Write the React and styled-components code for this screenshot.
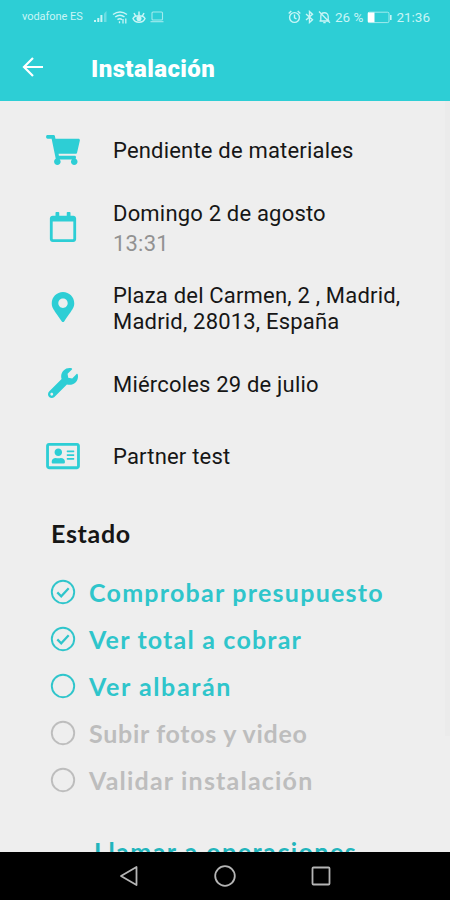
import React from 'react';
import styled, { createGlobalStyle } from 'styled-components';
import { FaShoppingCart, FaRegCalendar, FaMapMarkerAlt, FaWrench, FaRegAddressCard } from 'react-icons/fa';

const GlobalStyle = createGlobalStyle`
  body {
    margin: 0;
    background-color: #eeeeee;
    font-family: Roboto, "Noto Sans", sans-serif;
  }
`

// styled components
const Screen = styled.div`
  display: flex;
  flex-direction: column;
  width: 450px;
  height: 900px;
  overflow: hidden;
  background-color: #eeeeee;
`
const Header = styled.header`
  flex: none;
  height: 101px;
  color: white;
  background-color: #2dced5;
`
const StatusBar = styled.div`
  display: flex;
  justify-content: space-between;
  align-items: center;
  height: 34px;
  padding: 0 20px 0 22px;
  color: #c9f5f6;
`
const StatusGroup = styled.div`
  display: flex;
  align-items: center;
  gap: ${props => props.$gap};
  svg {
    display: block;
    flex: none;
  }
`
const StatusText = styled.span`
  font-size: ${props => props.$size};
  line-height: 16px;
  white-space: nowrap;
`
const Carrier = styled(StatusText)`
  margin-right: 7px;
  letter-spacing: -0.05px;
`
const TitleBar = styled.div`
  display: flex;
  align-items: center;
  height: 66px;
  padding-left: 22px;
  gap: 47px;
`
const BackButton = styled.button`
  display: flex;
  padding: 0;
  border: none;
  background: none;
  color: inherit;
  cursor: pointer;
`
const Title = styled.h1`
  margin: 3px 0 0;
  font-size: 24px;
  font-weight: 900;
  letter-spacing: 0.42px;
  line-height: 30px;
`
const Content = styled.main`
  flex: 1;
  display: flex;
  min-height: 0;
  overflow: hidden;
`
const Details = styled.div`
  flex: 1;
  padding-top: 11.5px;
`
const ScrollThumb = styled.div`
  width: 5px;
  height: 635px;
  background-color: #ebebeb;
`
const InfoRow = styled.div`
  display: grid;
  grid-template-columns: 34px 1fr;
  column-gap: 33px;
  align-items: center;
  height: ${props => props.$height};
  padding-left: 46px;
`
const InfoIcon = styled.div`
  display: flex;
  justify-content: center;
  padding-bottom: 3px;
  color: #2dced5;
  svg {
    width: 34px;
    height: 30px;
  }
`
const InfoText = styled.p`
  margin: 0;
  font-size: 22px;
  letter-spacing: 0.19px;
  line-height: 25.5px;
  white-space: nowrap;
  color: #161616;
`
const Time = styled(InfoText)`
  margin-top: 4px;
  color: #929292;
`
const SectionTitle = styled.h2`
  margin: 24.5px 0 21px 51px;
  font-family: Lato, sans-serif;
  font-size: 25px;
  font-weight: 700;
  letter-spacing: 0.7px;
  line-height: 28px;
  color: #161616;
`
const StepRow = styled.div`
  display: flex;
  align-items: center;
  gap: 13px;
  height: 47px;
  padding-left: 50px;
  color: ${props => props.$pending ? '#bdbdbd' : '#2fc5cb'};
`
const StepLabel = styled.span`
  font-family: Lato, sans-serif;
  font-size: 25px;
  font-weight: 700;
  letter-spacing: ${props => props.$spacing};
  line-height: 28px;
  white-space: nowrap;
`
const CallLink = styled(StepLabel)`
  display: block;
  margin: 34px 0 0 94px;
  color: #22b5bc;
`
const NavBar = styled.nav`
  flex: none;
  display: flex;
  justify-content: center;
  align-items: center;
  gap: 72px;
  height: 48px;
  background-color: black;
  color: #b5b5b5;
`

const LeftIcons = () => (
  <>
    <svg width="14" height="12" viewBox="0 0 14 12" fill="currentColor">
      <path d="M0 11h2V9H0zM3.3 11h2V7h-2zM6.4 11h2V4h-2z" />
      <path d="M10 11h2.5V0L10 2.5z" opacity=".4" />
    </svg>
    <svg width="16" height="13" viewBox="0 0 16 13" fill="none" stroke="currentColor" strokeWidth="1.5">
      <path d="M1 3.5Q8-1.5 15 3.5M3.2 6Q8 2.5 12.5 6M5.5 8.7Q8 6.7 10 8.7" />
      <path d="M7.5 10.2v2M11 8v4.5M13.8 7.5v5" strokeWidth="1.3" />
    </svg>
    <svg width="14" height="13" viewBox="0 0 14 13" fill="none" stroke="currentColor" strokeWidth="1.5">
      <path d="M1 7.5C3 3.8 11 3.8 13 7.5 11 12.5 3 12.5 1 7.5zM7 4.5V.5M3.5 4.8L2 2M10.5 4.8L12 2" />
      <circle cx="7" cy="7.5" r="1.8" fill="currentColor" />
    </svg>
    <svg width="14" height="12" viewBox="0 0 14 12" fill="none" stroke="currentColor" strokeWidth="1.1" opacity=".75">
      <rect x="2" y="1" width="10.5" height="8" rx="1" />
      <path d="M.5 10.7h13" />
    </svg>
  </>
)

const RightIcons = () => (
  <>
    <svg width="13" height="14" viewBox="0 0 13 14" fill="none" stroke="currentColor" strokeWidth="1.4">
      <circle cx="6.5" cy="7.5" r="4.9" />
      <path d="M6.5 4.5v3.3l2 1M.7 3.5L3.3 1M12.3 3.5L9.7 1" />
    </svg>
    <svg width="9" height="14" viewBox="0 0 9 14" fill="none" stroke="currentColor" strokeWidth="1.4">
      <path d="M1 4l6.5 5.8-3 2.7v-11l3 2.7L1 10" />
    </svg>
    <svg width="13" height="14" viewBox="0 0 13 14" fill="none" stroke="currentColor" strokeWidth="1.3">
      <path d="M1.5 11h10M2.8 11V6.5c0-5 7.4-5 7.4 0V11M5.3 12.6h2.4M1 1.5l11 11.3" />
    </svg>
  </>
)

const Battery = () => (
  <svg width="25" height="13" viewBox="0 0 25 13" fill="none" stroke="currentColor">
    <rect x="1" y="1.2" width="21" height="10.4" rx="1.5" strokeWidth="1" opacity=".75" />
    <rect x="1" y="1.5" width="6.5" height="9.8" fill="white" stroke="none" />
    <path d="M23.8 4v5" strokeWidth="1.6" />
  </svg>
)

const StepIcon = ({ done }) => (
  <svg width="26" height="26" viewBox="0 0 26 26" fill="none" stroke="currentColor" strokeWidth="1.9">
    <circle cx="13" cy="13" r="11.2" />
    {done && <path d="M7.3 13.4l3.9 3.9 7.5-8.1" strokeWidth="2.2" />}
  </svg>
)

const steps = [
  { label: 'Comprobar presupuesto', done: true, spacing: '1.25px' },
  { label: 'Ver total a cobrar', done: true, spacing: '1.2px' },
  { label: 'Ver albarán', spacing: '1.6px' },
  { label: 'Subir fotos y video', pending: true, spacing: '0.7px' },
  { label: 'Validar instalación', pending: true, spacing: '1.2px' },
]

const App = () => {
  return (
    <Screen>
      <GlobalStyle />
      <Header>
        <StatusBar>
          <StatusGroup $gap="4px">
            <Carrier $size="11px">vodafone ES</Carrier>
            <LeftIcons />
          </StatusGroup>
          <StatusGroup $gap="4px">
            <RightIcons />
            <StatusText $size="13.5px">26 %</StatusText>
            <Battery />
            <StatusText $size="13.5px">21:36</StatusText>
          </StatusGroup>
        </StatusBar>
        <TitleBar>
          <BackButton aria-label="Volver">
            <svg width="22" height="22" viewBox="0 0 22 22" fill="none" stroke="currentColor" strokeWidth="2.2">
              <path d="M21 11H2.5M11 2L2 11l9 9" />
            </svg>
          </BackButton>
          <Title>Instalación</Title>
        </TitleBar>
      </Header>
      <Content>
        <Details>
          <InfoRow $height="77px">
            <InfoIcon><FaShoppingCart /></InfoIcon>
            <InfoText>Pendiente de materiales</InfoText>
          </InfoRow>
          <InfoRow $height="78px">
            <InfoIcon><FaRegCalendar /></InfoIcon>
            <div>
              <InfoText>Domingo 2 de agosto</InfoText>
              <Time>13:31</Time>
            </div>
          </InfoRow>
          <InfoRow $height="82px">
            <InfoIcon><FaMapMarkerAlt /></InfoIcon>
            <InfoText>Plaza del Carmen, 2 , Madrid,<br />Madrid, 28013, España</InfoText>
          </InfoRow>
          <InfoRow $height="70px">
            <InfoIcon><FaWrench /></InfoIcon>
            <InfoText>Miércoles 29 de julio</InfoText>
          </InfoRow>
          <InfoRow $height="75px">
            <InfoIcon><FaRegAddressCard /></InfoIcon>
            <InfoText>Partner test</InfoText>
          </InfoRow>
          <SectionTitle>Estado</SectionTitle>
          {steps.map(step => (
            <StepRow key={step.label} $pending={step.pending}>
              <StepIcon done={step.done} />
              <StepLabel $spacing={step.spacing}>{step.label}</StepLabel>
            </StepRow>
          ))}
          <CallLink $spacing="1.45px">Llamar a operaciones</CallLink>
        </Details>
        <ScrollThumb />
      </Content>
      <NavBar>
        <svg width="24" height="24" viewBox="0 0 24 24" fill="none" stroke="currentColor" strokeWidth="1.8">
          <path d="M19.5 3v18L4 12z" strokeLinejoin="round" />
        </svg>
        <svg width="24" height="24" viewBox="0 0 24 24" fill="none" stroke="currentColor" strokeWidth="1.8">
          <circle cx="12" cy="12" r="9.8" />
        </svg>
        <svg width="24" height="24" viewBox="0 0 24 24" fill="none" stroke="currentColor" strokeWidth="1.8">
          <rect x="3.5" y="3.5" width="17" height="17" rx="1" />
        </svg>
      </NavBar>
    </Screen>
  )
}
export default App;
